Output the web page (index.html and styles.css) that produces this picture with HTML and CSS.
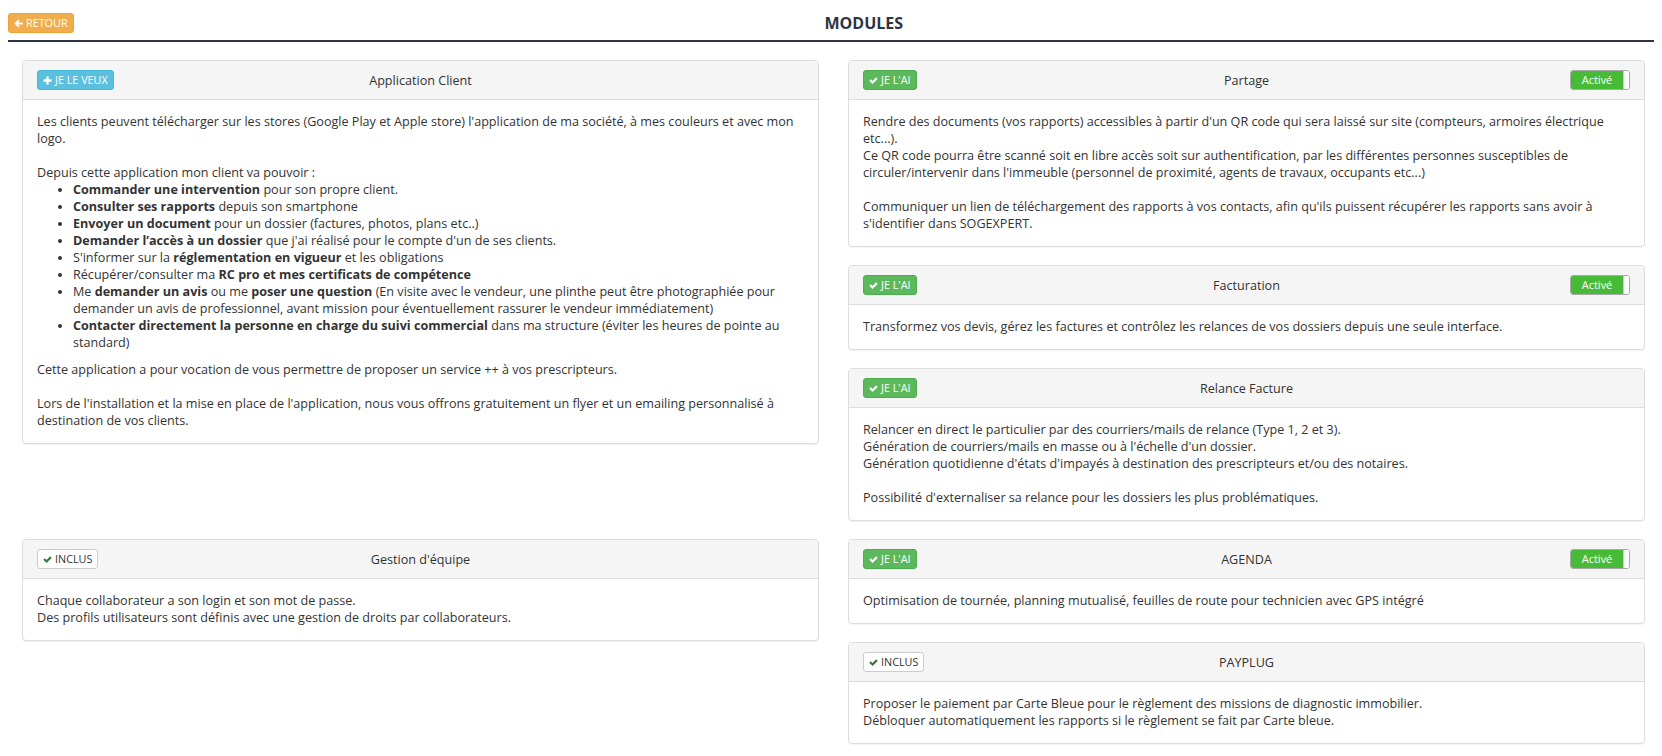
FILE: index.html
```html
<!DOCTYPE html>
<html lang="fr">
<head>
<meta charset="utf-8">
<title>Modules</title>
<link rel="stylesheet" href="styles.css">
</head>
<body>
<header class="top">
  <a class="btn btn-warning"><svg class="ico" viewBox="0 0 10 10"><path d="M0.3 5 L4.9 0.5 L6.4 2 L4.4 3.9 H9.7 V6.1 H4.4 L6.4 8 L4.9 9.5 Z"/></svg>RETOUR</a>
  <h1 class="page-title">MODULES</h1>
</header>

<main class="modules">
  <section class="row">
    <div class="col">
      <div class="panel">
        <div class="panel-heading">
          <span class="btn btn-info"><svg class="ico" viewBox="0 0 10 10"><path d="M3.7 0.6 H6.3 V3.7 H9.4 V6.3 H6.3 V9.4 H3.7 V6.3 H0.6 V3.7 H3.7 Z"/></svg>JE LE VEUX</span>
          <span class="panel-title">Application Client</span>
        </div>
        <div class="panel-body">
          Les clients peuvent télécharger sur les stores (Google Play et Apple store) l'application de ma société, à mes couleurs et avec mon logo.<br><br>
          Depuis cette application mon client va pouvoir :
          <ul class="features">
            <li><b>Commander une intervention</b> pour son propre client.</li>
            <li><b>Consulter ses rapports</b> depuis son smartphone</li>
            <li><b>Envoyer un document</b> pour un dossier (factures, photos, plans etc..)</li>
            <li><b>Demander l’accès à un dossier</b> que j'ai réalisé pour le compte d'un de ses clients.</li>
            <li>S'informer sur la <b>réglementation en vigueur</b> et les obligations</li>
            <li>Récupérer/consulter ma <b>RC pro et mes certificats de compétence</b></li>
            <li>Me <b>demander un avis</b> ou me <b>poser une question</b> (En visite avec le vendeur, une plinthe peut être photographiée pour demander un avis de professionnel, avant mission pour éventuellement rassurer le vendeur immédiatement)</li>
            <li><b>Contacter directement la personne en charge du suivi commercial</b> dans ma structure (éviter les heures de pointe au standard)</li>
          </ul>
          Cette application a pour vocation de vous permettre de proposer un service ++ à vos prescripteurs.<br><br>
          Lors de l'installation et la mise en place de l'application, nous vous offrons gratuitement un flyer et un emailing personnalisé à destination de vos clients.
        </div>
      </div>
    </div>

    <div class="col">
      <div class="panel">
        <div class="panel-heading">
          <span class="btn btn-success"><svg class="ico" viewBox="0 0 10 10"><path d="M0.3 5.4 L2 3.7 L3.9 5.6 L8 1.5 L9.7 3.2 L3.9 9 Z"/></svg>JE L'AI</span>
          <span class="panel-title">Partage</span>
          <span class="switch"><span class="switch-on">Activé</span><span class="switch-handle"></span></span>
        </div>
        <div class="panel-body">
          Rendre des documents (vos rapports) accessibles à partir d'un QR code qui sera laissé sur site (compteurs, armoires électrique etc...).<br>
          Ce QR code pourra être scanné soit en libre accès soit sur authentification, par les différentes personnes susceptibles de circuler/intervenir dans l'immeuble (personnel de proximité, agents de travaux, occupants etc...)<br><br>
          Communiquer un lien de téléchargement des rapports à vos contacts, afin qu'ils puissent récupérer les rapports sans avoir à s'identifier dans SOGEXPERT.
        </div>
      </div>

      <div class="panel">
        <div class="panel-heading">
          <span class="btn btn-success"><svg class="ico" viewBox="0 0 10 10"><path d="M0.3 5.4 L2 3.7 L3.9 5.6 L8 1.5 L9.7 3.2 L3.9 9 Z"/></svg>JE L'AI</span>
          <span class="panel-title">Facturation</span>
          <span class="switch"><span class="switch-on">Activé</span><span class="switch-handle"></span></span>
        </div>
        <div class="panel-body">
          Transformez vos devis, gérez les factures et contrôlez les relances de vos dossiers depuis une seule interface.
        </div>
      </div>

      <div class="panel">
        <div class="panel-heading">
          <span class="btn btn-success"><svg class="ico" viewBox="0 0 10 10"><path d="M0.3 5.4 L2 3.7 L3.9 5.6 L8 1.5 L9.7 3.2 L3.9 9 Z"/></svg>JE L'AI</span>
          <span class="panel-title">Relance Facture</span>
        </div>
        <div class="panel-body">
          Relancer en direct le particulier par des courriers/mails de relance (Type 1, 2 et 3).<br>
          Génération de courriers/mails en masse ou à l'échelle d'un dossier.<br>
          Génération quotidienne d'états d'impayés à destination des prescripteurs et/ou des notaires.<br><br>
          Possibilité d'externaliser sa relance pour les dossiers les plus problématiques.
        </div>
      </div>
    </div>
  </section>

  <section class="row">
    <div class="col">
      <div class="panel">
        <div class="panel-heading">
          <span class="btn btn-default"><svg class="ico ico-green" viewBox="0 0 10 10"><path d="M0.3 5.4 L2 3.7 L3.9 5.6 L8 1.5 L9.7 3.2 L3.9 9 Z"/></svg>INCLUS</span>
          <span class="panel-title">Gestion d'équipe</span>
        </div>
        <div class="panel-body">
          Chaque collaborateur a son login et son mot de passe.<br>
          Des profils utilisateurs sont définis avec une gestion de droits par collaborateurs.
        </div>
      </div>
    </div>

    <div class="col">
      <div class="panel">
        <div class="panel-heading">
          <span class="btn btn-success"><svg class="ico" viewBox="0 0 10 10"><path d="M0.3 5.4 L2 3.7 L3.9 5.6 L8 1.5 L9.7 3.2 L3.9 9 Z"/></svg>JE L'AI</span>
          <span class="panel-title">AGENDA</span>
          <span class="switch"><span class="switch-on">Activé</span><span class="switch-handle"></span></span>
        </div>
        <div class="panel-body">
          Optimisation de tournée, planning mutualisé, feuilles de route pour technicien avec GPS intégré
        </div>
      </div>

      <div class="panel">
        <div class="panel-heading">
          <span class="btn btn-default"><svg class="ico ico-green" viewBox="0 0 10 10"><path d="M0.3 5.4 L2 3.7 L3.9 5.6 L8 1.5 L9.7 3.2 L3.9 9 Z"/></svg>INCLUS</span>
          <span class="panel-title">PAYPLUG</span>
        </div>
        <div class="panel-body">
          Proposer le paiement par Carte Bleue pour le règlement des missions de diagnostic immobilier.<br>
          Débloquer automatiquement les rapports si le règlement se fait par Carte bleue.
        </div>
      </div>
    </div>
  </section>
</main>
</body>
</html>
```

FILE: styles.css
```css
* { box-sizing: border-box; }

body {
  margin: 8px;
  font-family: "Open Sans", "DejaVu Sans", sans-serif;
  font-size: 12.6px;
  line-height: 17px;
  color: #333;
  background: #fff;
}

.top {
  display: flex;
  align-items: center;
  padding: 5px 0 7px;
  border-bottom: 2px solid #2c3540;
}

.page-title {
  flex: 1;
  margin: 0;
  text-align: center;
  font-size: 16px;
  font-weight: 700;
  line-height: 20px;
  color: #2c3540;
}

.btn {
  display: inline-flex;
  align-items: center;
  gap: 3px;
  height: 20px;
  padding: 0 5px;
  font-size: 10.8px;
  line-height: 18px;
  border: 1px solid transparent;
  border-radius: 3px;
  color: #fff;
  white-space: nowrap;
  text-decoration: none;
}

.ico {
  width: 9px;
  height: 9px;
  fill: currentColor;
  flex: none;
}

.ico-green { fill: #3c763d; }

.btn-warning { background: #f0ad4e; border-color: #eea236; }
.btn-info { background: #5bc0de; border-color: #46b8da; }
.btn-success { background: #5cb85c; border-color: #4cae4c; }
.btn-default { background: #fff; border-color: #ccc; color: #333; }

.modules {
  padding: 18px 9px 0 14px;
}

.row {
  display: grid;
  grid-template-columns: 1fr 1fr;
  column-gap: 29px;
  align-items: start;
  margin-bottom: 18px;
}

.col {
  display: flex;
  flex-direction: column;
  gap: 18px;
}

.panel {
  background: #fff;
  border: 1px solid #ddd;
  border-radius: 4px;
  box-shadow: 0 1px 1px rgba(0, 0, 0, 0.05);
}

.panel-heading {
  display: grid;
  grid-template-columns: 1fr auto 1fr;
  align-items: center;
  min-height: 38px;
  padding: 9px 14px;
  background: #f5f5f5;
  border-bottom: 1px solid #ddd;
  border-radius: 3px 3px 0 0;
}

.panel-heading .btn { justify-self: start; }

.panel-title {
  grid-column: 2;
  font-size: 12.6px;
  color: #333;
}

.switch {
  grid-column: 3;
  justify-self: end;
  display: flex;
  width: 60px;
  height: 20px;
  border: 1px solid #aaa;
  border-radius: 3px;
  overflow: hidden;
}

.switch-on {
  flex: 1;
  background: #47bb37;
  color: #fff;
  font-size: 11px;
  line-height: 18px;
  text-align: center;
}

.switch-handle {
  width: 6px;
  background: #fff;
  border-left: 1px solid #ccc;
}

.panel-body {
  padding: 13px 14px 14px;
}

.features {
  margin: 0 0 10px;
  padding-left: 36px;
}
```
